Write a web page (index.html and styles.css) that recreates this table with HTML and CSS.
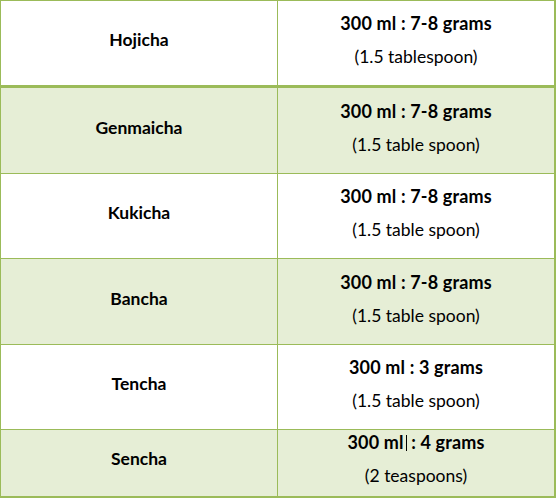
FILE: index.html
```html
<!DOCTYPE html>
<html>
<head>
<meta charset="utf-8">
<link rel="stylesheet" href="styles.css">
</head>
<body>
<div class="grid">
  <div class="cell name first">Hojicha</div>
  <div class="cell amount first"><div class="l1">300 ml : 7-8 grams</div><div class="l2">(1.5 tablespoon)</div></div>

  <div class="cell name shade">Genmaicha</div>
  <div class="cell amount shade"><div class="l1">300 ml : 7-8 grams</div><div class="l2">(1.5 table spoon)</div></div>

  <div class="cell name">Kukicha</div>
  <div class="cell amount"><div class="l1">300 ml : 7-8 grams</div><div class="l2">(1.5 table spoon)</div></div>

  <div class="cell name shade">Bancha</div>
  <div class="cell amount shade"><div class="l1">300 ml : 7-8 grams</div><div class="l2">(1.5 table spoon)</div></div>

  <div class="cell name">Tencha</div>
  <div class="cell amount"><div class="l1">300 ml : 3 grams</div><div class="l2">(1.5 table spoon)</div></div>

  <div class="cell name shade last">Sencha</div>
  <div class="cell amount shade last"><div class="l1">300 ml<span class="caret"></span> : 4 grams</div><div class="l2">(2 teaspoons)</div></div>
</div>
</body>
</html>
```

FILE: styles.css
```css
html, body {
  margin: 0;
  padding: 0;
  background: #ffffff;
}

.grid {
  display: grid;
  grid-template-columns: 276px 276px;
  grid-template-rows: 86px 85px 84px 85px 84px 66px;
  gap: 1px;
  width: 553px;
  padding: 1px 2px 2px 1px;
  background: #9bbb59;
  font-family: "Lato", "Open Sans", sans-serif;
  color: #000;
}

.cell {
  box-sizing: border-box;
  background: #ffffff;
  display: flex;
  flex-direction: column;
  align-items: center;
  justify-content: center;
  padding-bottom: 6px;
}

.cell.shade {
  background: #e6eed6;
}

.cell.first {
  border-bottom: 2px solid #9bbb59;
}

.cell.last {
  justify-content: flex-start;
  padding-top: 0;
  padding-bottom: 8px;
}

.cell.name.last {
  justify-content: center;
}

.name {
  font-weight: 700;
  font-size: 17.5px;
  line-height: 24px;
}

.amount .l1 {
  font-weight: 700;
  font-size: 18px;
  letter-spacing: 0.15px;
  line-height: 24px;
}

.amount .l2 {
  font-weight: 400;
  font-size: 17.5px;
  line-height: 24px;
  margin-top: 10px;
}

.caret {
  display: inline-block;
  width: 1px;
  height: 16px;
  background: #000;
  vertical-align: -2px;
  margin-left: 2px;
}
```
